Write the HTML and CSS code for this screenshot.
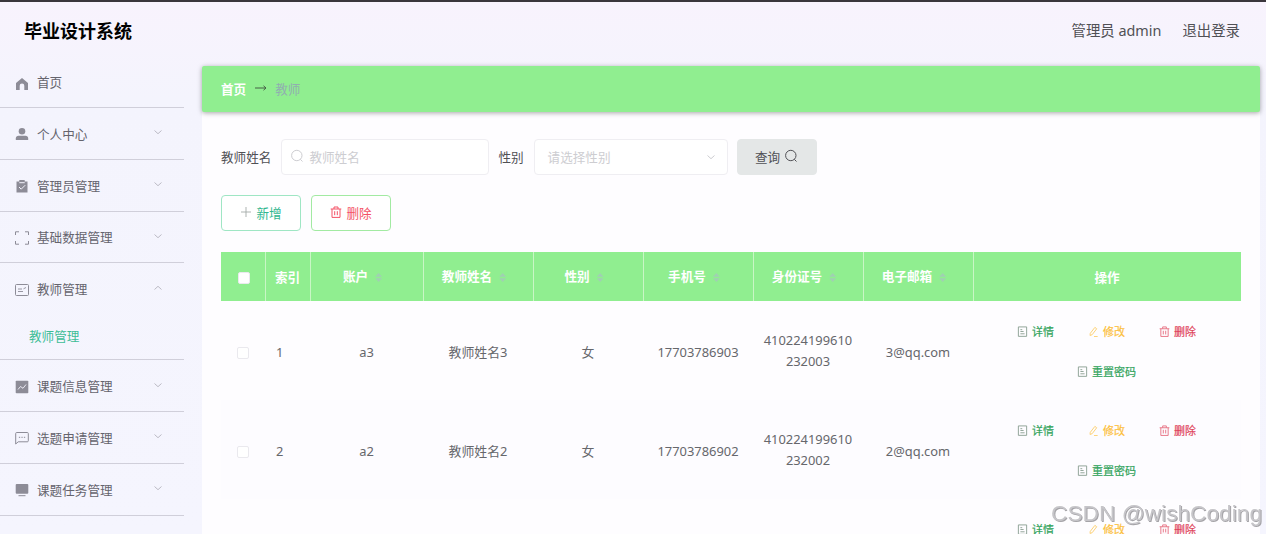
FILE: index.html
```
<!DOCTYPE html>
<html lang="zh-CN">
<head>
  <meta charset="UTF-8" />
  <meta name="viewport" content="width=device-width, initial-scale=1.0" />
  <title>毕业设计系统</title>
  <link rel="stylesheet" href="styles.css">
</head>
<body>
  <svg class="hidden">
    <symbol id="i-home" viewBox="0 0 14 14"><path fill="currentColor" d="M7 1 1 6v7h3.700V8.700a2.300 2.300 0 0 1 4.600 0V13H13V6z"/></symbol>
    <symbol id="i-user" viewBox="0 0 14 14"><circle cx="7" cy="4.200" r="3.300" fill="currentColor"/><path fill="currentColor" d="M.8 13V11.500C.8 9.700 2 8.800 3.500 8.800h7c1.500 0 2.700.9 2.700 2.700V13z"/></symbol>
    <symbol id="i-claim" viewBox="0 0 14 14"><path fill="currentColor" d="M1.500 2.500h2.800V1h5.400v1.500h2.800v11h-11z"/><path fill="none" stroke="#f4f3fd" d="M4.300 3.700h5.400M4 8l2.200 2.200 4-4"/></symbol>
    <symbol id="i-full" viewBox="0 0 14 14"><path fill="none" stroke="currentColor" d="M.5 4V.8H4M10 .8h3.500V4M13.500 10v3.200H10M4 13.200H.5V10"/></symbol>
    <symbol id="i-postcard" viewBox="0 0 14 14"><rect x=".5" y="1.500" width="13" height="11" rx="1" fill="none" stroke="currentColor"/><path fill="none" stroke="currentColor" stroke-width=".9" d="M3 6h4M3 8.500h5M8.500 5.800l2.500-1.300"/></symbol>
    <symbol id="i-chart" viewBox="0 0 14 14"><rect x=".7" y=".7" width="12.600" height="12.600" rx=".8" fill="currentColor"/><path fill="none" stroke="#f4f3fd" stroke-width=".9" d="M3 9.500l2.500-3 2.500 1.800L11 4.500"/></symbol>
    <symbol id="i-chat" viewBox="0 0 14 14"><path fill="none" stroke="currentColor" d="M.7 13V2.500q0-1 1-1h10.600q1 0 1 1v7.300q0 1-1 1H3.200z"/><path stroke="currentColor" stroke-dasharray="1.300 1.200" d="M3.900 6.300h7"/></symbol>
    <symbol id="i-monitor" viewBox="0 0 14 14"><rect x=".7" y="1" width="12.600" height="9.800" rx="1" fill="currentColor"/><path stroke="currentColor" d="M3.500 12.700h7"/></symbol>
    <symbol id="i-down" viewBox="0 0 10 10"><path fill="none" stroke="currentColor" d="M1.500 3.500 5 6.700l3.500-3.200"/></symbol>
    <symbol id="i-search" viewBox="0 0 14 14"><circle cx="6.800" cy="6.500" r="5.200" fill="none" stroke="currentColor"/><path stroke="currentColor" d="M10.300 10.300 12.500 12.500"/></symbol>
    <symbol id="i-plus" viewBox="0 0 12 12"><path stroke="currentColor" stroke-width=".9" d="M6 1v10M1 6h10"/></symbol>
    <symbol id="i-trash" viewBox="0 0 12 12"><path fill="none" stroke="currentColor" d="M.7 3h10.600M4 3V1h4v2M2 3v8.400h8V3M4.700 5.200v4M7.300 5.200v4"/></symbol>
    <symbol id="i-doc" viewBox="0 0 12 12"><path fill="none" stroke="currentColor" d="M1.500 1h9v10.300h-9zM3.700 4h2M3.700 6h3.500M3.700 8.500h4.600"/></symbol>
    <symbol id="i-edit" viewBox="0 0 12 12"><path fill="none" stroke="currentColor" d="M2.500 8 7.500 1.500l2 1.500-5 6.500-2.300.8zM6.500 11.500h4"/></symbol>
  </svg>

  <header>
    <h1>毕业设计系统</h1>
    <div class="user-info">
      <span>管理员 admin</span>
      <a>退出登录</a>
    </div>
  </header>

  <div class="layout">
    <aside>
      <ul class="menu">
        <li class="home"><svg class="icon"><use href="#i-home"/></svg><span>首页</span></li>
        <li><svg class="icon"><use href="#i-user"/></svg><span>个人中心</span><svg class="arrow"><use href="#i-down"/></svg></li>
        <li><svg class="icon"><use href="#i-claim"/></svg><span>管理员管理</span><svg class="arrow"><use href="#i-down"/></svg></li>
        <li><svg class="icon"><use href="#i-full"/></svg><span>基础数据管理</span><svg class="arrow"><use href="#i-down"/></svg></li>
        <li class="open"><svg class="icon"><use href="#i-postcard"/></svg><span>教师管理</span><svg class="arrow"><use href="#i-down"/></svg></li>
        <li class="sub">教师管理</li>
        <li><svg class="icon"><use href="#i-chart"/></svg><span>课题信息管理</span><svg class="arrow"><use href="#i-down"/></svg></li>
        <li><svg class="icon"><use href="#i-chat"/></svg><span>选题申请管理</span><svg class="arrow"><use href="#i-down"/></svg></li>
        <li><svg class="icon"><use href="#i-monitor"/></svg><span>课题任务管理</span><svg class="arrow"><use href="#i-down"/></svg></li>
      </ul>
    </aside>

    <main>
      <nav class="breadcrumb">
        <a>首页</a>
        <svg class="sep" viewBox="0 0 12 8"><path fill="none" stroke="currentColor" d="M0 4h11M8.500 1.800 11 4 8.500 6.200"/></svg>
        <span>教师</span>
      </nav>

      <section class="content">
        <div class="search-form">
          <label>教师姓名</label>
          <div class="input"><svg><use href="#i-search"/></svg><span>教师姓名</span></div>
          <label>性别</label>
          <div class="select"><span>请选择性别</span><svg><use href="#i-down"/></svg></div>
          <button class="btn btn-search">查询<svg><use href="#i-search"/></svg></button>
        </div>

        <div class="toolbar">
          <button class="btn btn-add"><svg><use href="#i-plus"/></svg>新增</button>
          <button class="btn btn-del"><svg><use href="#i-trash"/></svg>删除</button>
        </div>

        <table>
          <colgroup>
            <col class="c-check"><col class="c-index"><col class="c-account">
            <col><col><col><col><col>
            <col class="c-action">
          </colgroup>
          <thead>
            <tr>
              <th><i class="checkbox"></i></th>
              <th class="index low">索引</th>
              <th>账户<i class="sort"></i></th>
              <th>教师姓名<i class="sort"></i></th>
              <th>性别<i class="sort"></i></th>
              <th>手机号<i class="sort"></i></th>
              <th>身份证号<i class="sort"></i></th>
              <th>电子邮箱<i class="sort"></i></th>
              <th class="low">操作</th>
            </tr>
          </thead>
          <tbody id="rows"></tbody>
        </table>
      </section>
    </main>
  </div>

  <div class="watermark">CSDN @wishCoding</div>

  <script>
    const teachers = [
      { account: 'a3', name: '教师姓名3', sex: '女', phone: '17703786903', idCard: ['410224199610', '232003'], email: '3@qq.com' },
      { account: 'a2', name: '教师姓名2', sex: '女', phone: '17703786902', idCard: ['410224199610', '232002'], email: '2@qq.com' },
      { account: 'a1', name: '教师姓名1', sex: '女', phone: '17703786901', idCard: ['410224199610', '232001'], email: '1@qq.com' }
    ];

    document.getElementById('rows').innerHTML = teachers.map((t, idx) => `
      <tr>
        <td><i class="checkbox"></i></td>
        <td class="index">${idx + 1}</td>
        <td>${t.account}</td>
        <td>${t.name}</td>
        <td>${t.sex}</td>
        <td>${t.phone}</td>
        <td class="id-card">${t.idCard.join('<br>')}</td>
        <td>${t.email}</td>
        <td>
          <div class="actions">
            <a class="green"><svg><use href="#i-doc"/></svg>详情</a>
            <a class="yellow"><svg><use href="#i-edit"/></svg>修改</a>
            <a class="red"><svg><use href="#i-trash"/></svg>删除</a>
            <a class="green"><svg><use href="#i-doc"/></svg>重置密码</a>
          </div>
        </td>
      </tr>
    `).join('');
  </script>
</body>
</html>
```

FILE: styles.css
```
* { box-sizing: border-box; }
body { margin: 0; height: 534px; overflow: hidden; border-top: 2px solid #3a363c; font: 12.6px "Noto Sans", "Noto Sans CJK SC", sans-serif; color: #66676c; background: linear-gradient(#f8f3fd, #f4f4fd 100px, #f5f5fe); }
.hidden { display: none; }

header { height: 55px; padding: 0 26px 0 24px; display: flex; justify-content: space-between; align-items: center; }
header h1 { margin: 3px 0 0; font-size: 18px; line-height: 24px; color: #000; }
.user-info { display: flex; gap: 21px; font-size: 14.4px; color: #505055; }

.layout { display: flex; height: 477px; }
aside { width: 202px; flex: none; }
.menu { list-style: none; margin: 0; padding: 0; width: 184px; }
.menu li { height: 51.8px; padding: 0 21px 0 15px; display: flex; align-items: center; border-bottom: 1px solid #d0cfda; color: #65646d; }
.menu .icon { width: 14px; height: 14px; margin: 2px 8px 0 0; color: #8d8c97; }
.menu .arrow { width: 10px; height: 10px; margin: -2px 0 0 auto; color: #bcbbc5; }
.menu li.home { height: 51px; }
.menu li.home .icon { margin-top: 4px; }
.menu li.home span { margin-top: -2px; }
.menu li.open { border-bottom: none; }
.menu li.open span { margin-top: -1px; }
.menu li.open .arrow { transform: rotate(180deg); }
.menu li.sub { height: 45px; padding: 0 0 3px 29px; color: #3dbd96; }

main { width: 1058px; margin-top: 9px; background: #fefdff; }
.breadcrumb { height: 46px; padding: 0 19px 2px; display: flex; align-items: center; background: #90ee90; border-radius: 2px; box-shadow: 0 1px 5px rgba(0,0,0,0.35); position: relative; }
.breadcrumb a { color: #fff; font-weight: bold; }
.breadcrumb .sep { width: 12px; height: 8px; margin: 0 8px 0 9px; color: #476047; }
.breadcrumb span { color: #91aeb0; }

.content { padding: 27px 19px 0; }
.search-form { display: flex; align-items: center; color: #505055; }
.search-form label { margin-top: -2px; }
.input, .select { height: 36px; padding-bottom: 2px; display: flex; align-items: center; border: 1px solid #efeef2; border-radius: 4px; background: #fff; color: #cdcdd1; }
.input { width: 208px; margin: 0 9px 0 10px; padding-left: 8px; }
.input svg { width: 14px; height: 14px; margin-right: 5px; }
.select { width: 194px; margin: 0 9px 0 10px; padding: 0 11px 2px 13px; justify-content: space-between; }
.select svg { width: 10px; height: 10px; margin-top: 2px; }
.btn { width: 80px; height: 36px; padding: 0 0 2px; display: flex; align-items: center; justify-content: center; gap: 4px; border-radius: 4px; font: inherit; background: #fff; }
.btn svg { width: 12px; height: 12px; }
.btn-search { border: 1px solid #e4e7e7; background: #e4e7e7; color: #505055; }
.btn-search svg { width: 14px; height: 14px; }
.toolbar { display: flex; gap: 10px; margin: 20px 0 21px; }
.btn-add { border: 1px solid #9fe6c4; color: #32b78f; }
.btn-add svg { color: #a4aaa8; }
.btn-del { border: 1px solid #a2eaa2; color: #f45266; }

table { width: 1020px; table-layout: fixed; border-collapse: separate; border-spacing: 0; }
.c-check { width: 45px; }
.c-index { width: 45px; }
.c-account { width: 113px; }
col { width: 110px; }
.c-action { width: 267px; }
th, td { padding: 0 1px 0 0; text-align: center; }
th { height: 49px; padding-bottom: 2px; background: #90ee90; color: #fff; border-right: 1px solid #c9f6c5; }
th:last-child { border-right: none; }
th.low { padding-top: 2px; }
th:first-child { padding: 2px 0 0 1px; }
.sort { display: inline-block; width: 7px; height: 9px; margin: 0 8px 0 7px; vertical-align: -1px; background: #a0d0b2; clip-path: polygon(50% 0, 100% 42%, 0 42%, 0 58%, 100% 58%, 50% 100%, 0 58%, 0 42%); }
td { height: 99px; padding-top: 3px; padding-right: 2px; font-size: 12.9px; line-height: 21px; }
td.id-card { padding-top: 0; }
tbody tr:nth-child(even) { background: #fdfcff; }
td.index { text-align: left; padding-left: 10px; }
.checkbox { display: inline-block; width: 12px; height: 12px; border: 1px solid #eae9ee; border-radius: 2px; background: #fff; vertical-align: -2px; }

.actions { width: 190px; margin: -2px auto 0; display: flex; flex-wrap: wrap; justify-content: center; gap: 19px 34px; font-size: 11px; line-height: 21px; }
.actions a { display: flex; align-items: center; gap: 4px; -webkit-text-stroke: 0.2px; }
.actions svg { width: 11px; height: 11px; opacity: 0.75; }
.green { color: #31a35b; }
.green svg { color: #65806f; }
.yellow { color: #fcbf3b; }
.red { color: #df4259; }

.watermark { position: fixed; right: 4px; bottom: 7px; font: 22.7px/28px "Liberation Sans", sans-serif; color: #c6c5c9; text-shadow: 1px 1px 0 #a5a4a8, -1px -1px 0 #fff; }
```
